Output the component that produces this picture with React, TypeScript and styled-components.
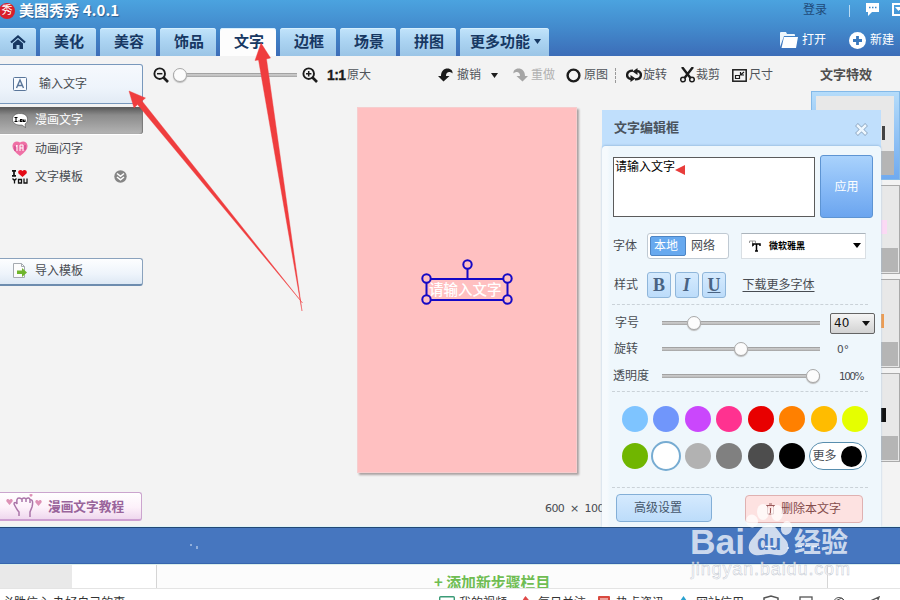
import React from 'react';
import styled, { createGlobalStyle, css } from 'styled-components';

const Global = createGlobalStyle`
  * { box-sizing: border-box; }
  html, body { margin: 0; padding: 0; overflow: hidden; }
  body { font: 12px/16px "Liberation Sans", "Noto Sans CJK SC", sans-serif; color: #484c52; }
`;

const Page = styled.div`
  position: relative; width: 900px; height: 600px; overflow: hidden;
  display: flex; flex-direction: column; background: #f3f3f3; white-space: nowrap;
`;

/* header */
const Header = styled.header`
  height: 56px; flex: none; display: flex; flex-direction: column;
  background: linear-gradient(#4ba3df, #438bcd 48%, #3c6db8);
`;
const TitleBar = styled.div`
  height: 28px; display: flex; align-items: center; padding-bottom: 6px; color: #fff;
  > * { flex: none; }
`;
const Logo = styled.div`
  width: 16px; height: 16px; margin-left: -1px; border-radius: 50%; background: #d91f2a; color: #fff;
  font-size: 11px; line-height: 15px; text-align: center;
`;
const AppName = styled.h1`
  margin: -2px 0 0 4px; font: bold 15px/20px "Noto Sans CJK SC", sans-serif; width: 102px; letter-spacing: .05px;
  text-shadow: 1px 1px 1px #2a5d91;
`;
const Login = styled.span` margin-left: 682px; color: #1f4a79; width: 24px; line-height: 16px; margin-top: -2px; `;
const Separator = styled.span` width: 1px; height: 12px; margin: 0 16px 0 22px; background: #b9dcf4; `;
const ChatIcon = styled.svg` margin-top: -3px; `;
const WindowIcon = styled.svg` margin-left: 13px; margin-top: -3px; `;
const TabBar = styled.nav` height: 28px; display: flex; gap: 4px; `;
const Tab = styled.button<{ $w: number; $active?: boolean }>`
  width: ${p => p.$w}px; height: 28px; padding: 0 0 2px 2px; border: 0; border-radius: 3px 3px 0 0;
  display: flex; align-items: center; justify-content: center; gap: 4px; color: #173863;
  font: bold 15px/22px "Noto Sans CJK SC", sans-serif;
  background: ${p => (p.$active ? '#fdfdfd' : 'linear-gradient(#c2e4fb, #acd4f2 45%, #9bc5e6)')};
  box-shadow: inset 0 1px #d7effd;
  &:first-child { border-top-left-radius: 0; padding: 0 0 1px; }
`;
const HeaderAction = styled.div<{ $ml: number }>`
  display: flex; align-items: center; gap: 4px; margin-left: ${p => p.$ml}px; height: 24px; color: #fff;
`;

/* main area */
const Main = styled.main`
  height: 471px; flex: none; display: grid; grid-template-columns: 143px 668px 89px; overflow: hidden;
  border-bottom: 1px solid #dff4f8;
`;
const Sidebar = styled.aside` display: flex; flex-direction: column; padding-top: 8px; `;
const InputTextButton = styled.button`
  height: 40px; border: 1px solid #7898bc; border-left: 0; border-radius: 0 3px 3px 0; padding: 0 0 0 13px;
  background: linear-gradient(#f6f9fd, #eef4fb 60%, #e2ebf5); display: flex; align-items: center; gap: 12px;
  font: inherit; color: inherit;
`;
const MenuItem = styled.div<{ $active?: boolean }>`
  height: 28px; display: flex; align-items: center; padding: 0 0 1px 12px;
  > span { width: 48px; margin-left: 7px; }
  > svg:nth-of-type(2) { margin-left: 31px; }
  ${p => p.$active && css`
    margin-top: 3px; height: 27px; margin-bottom: 1px; color: #fff; border-radius: 0 3px 3px 0; padding-bottom: 1px;
    background: linear-gradient(#565656, #8b8b8b 30%, #b4b4b4); box-shadow: inset -1px 0 1px #777, 0 1px #fff;
  `}
`;
const ImportButton = styled.button`
  margin-top: 67px; height: 28px; border: 1px solid #8aa2bd; border-bottom: 2px solid #6d8cae; border-left: 0;
  border-radius: 0 3px 3px 0; padding: 0 0 2px 13px; display: flex; align-items: center; gap: 8px;
  background: linear-gradient(#fdfeff, #eef4fb 60%, #dde8f4); font: inherit; color: inherit;
`;
const TutorialButton = styled.button`
  margin-top: 206px; width: 142px; height: 29px; border: 1px solid #cba5ce; border-bottom: 2px solid #cda0d1;
  border-left: 0; border-radius: 0 3px 3px 0; background: linear-gradient(#fff, #fdf1fa 55%, #efd8ee);
  padding: 0 0 0 6px; display: flex; align-items: center; gap: 6px;
  font: bold 12.7px/18px "Noto Sans CJK SC", sans-serif; color: #99649b;
`;

const Workspace = styled.section` display: flex; flex-direction: column; min-width: 0; `;
const Toolbar = styled.div` height: 38px; display: flex; align-items: center; padding-left: 9px; color: #50545a; `;
const Tool = styled.div<{ $ml: number; $w: number; $off?: boolean }>`
  margin-left: ${p => p.$ml}px; width: ${p => p.$w}px; display: flex; align-items: center; flex: none;
  justify-content: space-between; color: ${p => (p.$off ? '#b0b0b0' : 'inherit')};
  svg { color: ${p => (p.$off ? '#a5a5a5' : '#1c1c1c')}; flex: none; }
`;
const Ratio = styled.b` font: bold 14px/16px "Liberation Sans", sans-serif; color: #1c1c1c; letter-spacing: -.6px; -webkit-text-stroke: .3px #1c1c1c; `;
const Dotted = styled.i` margin-left: 7px; height: 15px; border-left: 1px dashed #999; `;
const Track = styled.div<{ $w: number; $ml?: number }>`
  width: ${p => p.$w}px; margin-left: ${p => p.$ml || 0}px; height: 14px; display: flex; align-items: center; flex: none;
  background: linear-gradient(#8d8d8d, #c9c9c9 35%, #c4c4c4 60%, #a0a0a0) center / 100% 4px no-repeat;
`;
const Knob = styled.i<{ $x: number }>`
  width: 14px; height: 14px; margin-left: ${p => p.$x}px; border-radius: 50%; background: #fcfcfc;
  border: 1px solid #a9a9a9; flex: none; box-shadow: 0 1px 1px #bbb;
`;
const Artboard = styled.div`
  position: relative; width: 220px; height: 366px; margin: 13px 0 0 214px; background: #ffc0c1;
  border: 1px solid #f6cdce; box-shadow: 2px 2px 2px #aaa1a1; flex: none;
`;
const Selection = styled.svg` position: absolute; left: 63px; top: 150px; `;
const Dimensions = styled.div`
  margin: 28px 0 0 402px; height: 16px; font: 11px/16px "DejaVu Sans", sans-serif; word-spacing: 3px; letter-spacing: -.6px;
`;

const Gallery = styled.aside` display: flex; flex-direction: column; `;
const GalleryTitle = styled.h2`
  margin: 0; height: 35px; padding: 9px 0 0 9px; font: bold 13px/18px "Noto Sans CJK SC", sans-serif; color: #4e4e4e;
`;
const Thumb = styled.div<{ $active?: boolean }>`
  height: 89px; margin-bottom: 5px; flex: none; display: flex; flex-direction: column; justify-content: space-between;
  border: 1px solid #aaa; background: #e8e8e8; padding: 1px 1px 1px 1px;
  ${p => p.$active && css` border-color: #83b9e8; padding: 4px 5px 4px 4px; background: linear-gradient(#b5dcfa, #6faaf0); `}
`;
const ThumbArt = styled.div<{ $c: string; $w: number; $y: number }>`
  flex: 1; background: #e8e8e8; padding: ${p => p.$y}px 0 0 66px;
  &::after { content: ''; display: block; width: ${p => p.$w}px; height: 14px; background: ${p => p.$c}; }
`;
const ThumbCaption = styled.div` height: 24px; background: #b5b5b5; `;

/* floating editor */
const Dialog = styled.section`
  position: absolute; left: 602px; top: 110px; width: 279px; height: 417px; display: flex; flex-direction: column;
  background: #c0dffc;
`;
const DialogHead = styled.header`
  height: 36px; display: flex; justify-content: space-between; align-items: center; padding: 0 13px 2px 12px;
  font: bold 13px/18px "Noto Sans CJK SC", sans-serif; color: #4a535d; flex: none;
  svg { margin-top: 4px; }
`;
const DialogBody = styled.div`
  flex: 1; border-radius: 4px 4px 0 0; background: linear-gradient(90deg, #f6fafd 5px, #eff7fc 8px); box-shadow: 0 -1px 2px #9fc2e4;
  display: grid; grid-template-rows: 80px 39px 39px 38px 13px 36px 96px 40px; padding-left: 11px;
`;
const Row = styled.div<{ $pt?: number }>` display: flex; align-items: center; min-width: 0; padding-top: ${p => p.$pt || 0}px; `;
const divider = css`
  position: relative; margin-right: 13px;
  &::before { content: ''; position: absolute; left: -1px; right: 0; top: 0; border-top: 1px dashed #cad2d8; }
`;
const Divided = styled(Row)` ${divider} `;
const TextField = styled.textarea`
  width: 202px; height: 60px; resize: none; border: 1px solid #5b5b5b; padding: 0 1px; margin: 1px 0 0;
  background: #fff; overflow: hidden; color: #000; font: 12px/16px "Noto Sans CJK SC", sans-serif;
`;
const Caret = styled.svg` position: absolute; left: 73px; top: 54px; `;
const Apply = styled.button`
  width: 53px; height: 63px; margin: 1px 0 0 5px; border: 1px solid #5d94d3; border-radius: 3px; color: #fff; padding: 0;
  background: linear-gradient(#a9d2fc, #86b9f6 55%, #6ba5ef); font: inherit;
`;
const Label = styled.label<{ $w?: number; $ml?: number }>`
  width: ${p => p.$w || 34}px; margin-left: ${p => p.$ml || 0}px; flex: none;
`;
const Segmented = styled.div`
  width: 82px; height: 26px; border: 1px solid #c0cad3; border-radius: 3px; background: #fff; padding: 2px;
  display: flex; align-items: center; gap: 4px;
`;
const Segment = styled.span<{ $on?: boolean }>`
  height: 20px; width: 37px; line-height: ${p => (p.$on ? 18 : 20)}px; padding-left: ${p => (p.$on ? 3 : 1)}px; border-radius: 2px;
  ${p => p.$on && css` color: #fff; background: #67a9ef; border: 1px solid #4d85c4; `}
`;
const FontSelect = styled.div`
  margin-left: 12px; width: 125px; height: 26px; border: 1px solid #d9dfe4; border-top-color: #abb4bc; background: #fff;
  display: flex; align-items: center; padding: 0 4px 0 7px; color: #000;
  span { font: bold 9px/14px "Noto Sans CJK SC", sans-serif; margin-left: 8px; flex: 1; }
`;
const StyleButton = styled.button<{ $kind: string }>`
  width: 24px; height: 26px; border: 1px solid #8fb6da; border-radius: 3px; margin-right: 3.5px; padding: 0;
  background: linear-gradient(#d6ebfe, #bcdcfa); color: #496383; font: bold 18px/22px "Liberation Serif", serif;
  font-style: ${p => (p.$kind === 'I' ? 'italic' : 'normal')};
  text-decoration: ${p => (p.$kind === 'U' ? 'underline' : 'none')}; text-decoration-thickness: 1px;
`;
const Link = styled.a` margin-left: 13px; text-decoration: underline; text-underline-offset: 2px; `;
const SizeSelect = styled.div`
  width: 45px; height: 21px; margin-left: 10px; border: 1px solid #646464; border-radius: 2px; flex: none;
  background: linear-gradient(#f5f5f5, #d2d2d2); display: flex; align-items: center; justify-content: space-between;
  padding: 0 4px 0 3px; color: #111; font: 12px/18px "DejaVu Sans", sans-serif;
`;
const Value = styled.span<{ $ml: number }>`
  margin-left: ${p => p.$ml}px; font: 10.5px/14px "DejaVu Sans", sans-serif; letter-spacing: ${p => (p.$ml > 18 ? -1.5 : 0)}px;
`;
const Palette = styled.div`
  ${divider}
  display: grid; grid-template-columns: repeat(8, 26px); grid-auto-rows: 26px; column-gap: 5.43px; row-gap: 11px;
  padding: 15px 0 0 9px;
`;
const Swatch = styled.i<{ $c: string; $on?: boolean }>`
  border-radius: 50%; background: ${p => p.$c};
  ${p => p.$on && css` margin: -2px; border: 2px solid #77acd2; `}
`;
const More = styled.div`
  grid-column: span 2; width: 58px; height: 28px; margin: -1px 0 0 -2px; border: 1px solid #588eae; border-radius: 14px;
  background: #fff; display: flex; align-items: center; padding: 0 4px 0 3px; justify-content: space-between;
  i { width: 21px; height: 21px; border-radius: 50%; background: #000; }
`;
const FootButton = styled.button<{ $danger?: boolean }>`
  width: ${p => (p.$danger ? 118 : 96)}px; height: 28px; border-radius: 4px; font: inherit; display: flex; align-items: center;
  flex: none; padding: 0 0 0 ${p => (p.$danger ? 20 : 17)}px; gap: 6px;
  margin: ${p => (p.$danger ? '3px 0 0 33px' : '2px 0 0 3px')};
  border: 1px solid ${p => (p.$danger ? '#dfb1b1' : '#83afd7')};
  background: ${p => (p.$danger ? '#fde2e1' : 'linear-gradient(#d5eafe, #bcdcfa)')};
  color: ${p => (p.$danger ? '#854c4c' : '#45576c')};
`;

/* lower page */
const Band = styled.div` height: 37px; flex: none; background: #4676bf; border-top: 1px solid #234876; border-bottom: 1px solid #3765ae; padding: 10px 0 0 190px; `;
const Lower = styled.footer` flex: 1; background: #fff; border-top: 1px solid #dcefeb; display: flex; flex-direction: column; `;
const StepRow = styled.div` height: 24px; flex: none; display: flex; border-bottom: 1px solid #e4e4e4; `;
const Gray = styled.div` width: 72px; background: #e9e9e9; `;
const StepBox = styled.div`
  margin-left: 84px; width: 672px; border: solid #d5d5d5; border-width: 0 1px; background: #fcfcfc; overflow: hidden;
  padding: 6px 0 0 277px; color: #6fbd52; font: bold 14.9px/22px "Noto Sans CJK SC", sans-serif;
`;
const Status = styled.div` height: 22px; flex: none; display: flex; align-items: center; padding: 6px 0 0 2px; color: #333; `;
const StatusItem = styled.div<{ $ml: number; $w?: number }>`
  margin-left: ${p => p.$ml}px; display: flex; width: ${p => p.$w || 67}px; flex: none; justify-content: space-between; align-items: center;
`;

/* overlays */
const Overlay = styled.svg` position: absolute; left: 0; top: 0; pointer-events: none; `;

const Down = ({ s = 8 }: { s?: number }) => <svg width={s} height="5"><path d={`M0 0H${s}L${s / 2} 5Z`} fill="currentColor" /></svg>;
const Lens = ({ plus }: { plus?: boolean }) => (
  <svg width="16" height="16" viewBox="0 0 16 16" fill="none" stroke="currentColor">
    <circle cx="6.7" cy="6.7" r="5.3" strokeWidth="1.9" /><path d="M10.5 10.5L15 15" strokeWidth="2.7" />
    <path d={plus ? 'M4 6.7h5.4M6.7 4v5.4' : 'M4 6.7h5.4'} strokeWidth="1.5" />
  </svg>
);
const Turn = ({ redo }: { redo?: boolean }) => (
  <svg width="15" height="14" viewBox="0 0 15 14">
    <path transform={redo ? 'translate(15 0) scale(-1 1)' : undefined} fill="currentColor"
      d="M0 8h3C3 3 6 .5 9.5.5 13 .5 15 3 14.5 5.500 12.500 3.500 8 3 8 8h3.500L5.500 13.500Z" />
  </svg>
);

const colors = ['#7ec4ff', '#7096fb', '#ca47fc', '#ff3290', '#e80000', '#ff8000', '#ffbc00', '#e5ff00',
  '#70b600', '#ffffff', '#b2b2b2', '#808080', '#4d4d4d', '#000000'];

export default function App() {
  return (
    <Page>
      <Global />
      <Header>
        <TitleBar>
          <Logo>秀</Logo><AppName>美图秀秀 4.0.1</AppName>
          <Login>登录</Login><Separator />
          <ChatIcon width="13" height="13" viewBox="0 0 13 13"><path d="M0 0h13v9H6l-4 4V9H0Z" fill="#fff" /><path d="M3 4.500h1.500M6 4.500h1.500M9 4.500h1.500" stroke="#3986c7" strokeWidth="1.500" /></ChatIcon>
          <WindowIcon width="13" height="13" viewBox="0 0 13 13"><rect x="1" y="1" width="11" height="11" fill="none" stroke="#fff" strokeWidth="2" /><path d="M3 4h7L6.500 8Z" fill="#fff" /></WindowIcon>
        </TitleBar>
        <TabBar>
          <Tab $w={36}>
            <svg width="16" height="14" viewBox="0 0 16 14"><path d="M1 7.500L8 1.500l7 6" fill="none" stroke="#173863" strokeWidth="2.200" /><path d="M3 8.500L8 4.300l5 4.200V14H9.500v-4h-3v4H3Z" fill="#173863" /></svg>
          </Tab>
          {['美化', '美容', '饰品', '文字', '边框', '场景', '拼图'].map(t => <Tab key={t} $w={56} $active={t === '文字'}>{t}</Tab>)}
          <Tab $w={89}>更多功能<Down s={7} /></Tab>
          <HeaderAction $ml={227}>
            <svg width="18" height="16" viewBox="0 0 18 16"><path d="M0 15V1q0-1 1-1h5l1 2h7q1 0 1 1v1H4Z" fill="#eef7fd" /><path d="M4 5h14l-2 11H1.500Z" fill="#fff" /></svg>打开
          </HeaderAction>
          <HeaderAction $ml={19}>
            <svg width="17" height="17" viewBox="0 0 17 17"><circle cx="8.500" cy="8.500" r="8.500" fill="#fff" /><path d="M4 8.500h9M8.500 4v9" stroke="#3978bd" strokeWidth="2.800" /></svg>新建
          </HeaderAction>
        </TabBar>
      </Header>

      <Main>
        <Sidebar>
          <InputTextButton>
            <svg width="14" height="14" viewBox="0 0 14 14" fill="none" stroke="#5a769a"><rect x=".5" y=".5" width="13" height="13" rx="1" fill="#f8fbff" /><path d="M3.500 11L7 3l3.500 8M5 8.500h4" strokeWidth="1.400" /></svg>
            输入文字
          </InputTextButton>
          <MenuItem $active>
            <svg width="16" height="15" viewBox="0 0 16 15"><path d="M8 .5c5 0 7.500 2.500 7.500 5.800 0 2.500-1 3.800-2.500 4.700l.5 3.500L10 12C4 12.600.5 10 .5 6.500.5 3 3 .5 8 .5Z" fill="#fff" stroke="#333" strokeWidth=".5" /><path d="M2.500 4.500h3M4 4.500v4M2.500 8.500h3M7 8.500V7.500M8.500 6.500h1.500v2H8.500ZM11.500 6.500v2h1.500v-2" stroke="#000" fill="none" strokeWidth="1.100" /></svg>
            <span>漫画文字</span>
          </MenuItem>
          <MenuItem>
            <svg width="16" height="15" viewBox="0 0 16 15"><path d="M8 15C3 11.500 0 8 .5 4.500 1 .5 5-.5 8 1.500 11-.5 15 .5 15.500 4.500 16 8 13 11.500 8 15Z" fill="#ef70a5" /><path d="M5 4v6M4 6l1-2M8 4h3v6M8 7h3M8 4v6" stroke="#fff" fill="none" /><path d="M3 5v5M13 4v5" stroke="#c33f87" /></svg>
            <span>动画闪字</span>
          </MenuItem>
          <MenuItem>
            <svg width="16" height="14" viewBox="0 0 16 14"><path d="M0 .8h4M2 1v5M0 5.800h4" stroke="#111" strokeWidth="1.700" /><path d="M10.500 7L6.500 3.500C5 .5 9-1 10.500 1 12-1 16 .5 14.500 3.500Z" fill="#e40b16" /><path d="M.5 8.500l2 2 2-2M2.500 10.500v3M6.500 9.500h3v3.500h-3ZM12 8.500V13h3V8.500" stroke="#111" fill="none" strokeWidth="1.300" /></svg>
            <span>文字模板</span>
            <svg width="13" height="13" viewBox="0 0 13 13"><circle cx="6.500" cy="6.500" r="6.200" fill="#858585" /><path d="M3 3.500l3.500 2.800L10 3.500M3 7l3.500 2.800L10 7" fill="none" stroke="#fff" strokeWidth="1.600" /></svg>
          </MenuItem>
          <ImportButton>
            <svg width="14" height="15" viewBox="0 0 14 15"><path d="M.5.5h8l3 3v11H.5Z" fill="#fcfcfc" stroke="#a5aab0" /><path d="M8.500.5v3h3" fill="none" stroke="#a5aab0" /><path d="M4 7.500h5V5l5 4.500L9 14v-3H4Z" fill="#6fb52d" /></svg>
            导入模板
          </ImportButton>
          <TutorialButton>
            <svg width="36" height="24" viewBox="0 0 36 24" fill="none"><path d="M13 22v-4c-2-2-4-6-5-8 0-2 2-2 3 0 0-2-1-6 2-6 2 0 2 1 3 1 2-2 3-1 4 0 2-2 4-1 4 1 3-1 3 3 2 7l-2 5v5M16 5v3M20 5v3M24 6v3" stroke="#ab76a9" strokeWidth="1.500" /><g fill="#dd91b5"><path d="M3.500 11L.5 7.500C-.5 5 2.500 4 3.500 6 4.500 4 7.500 5 6.500 7.500Z" /><path d="M32.500 12L29.500 8.500C28.500 6 31.500 5 32.500 7 33.500 5 36.500 6 35.500 8.500Z" /><path d="M25 3l-1.500-1.500C23 0 25-.5 25 .5 25-.5 27 0 26.500 1.500Z" /></g></svg>
            漫画文字教程
          </TutorialButton>
        </Sidebar>

        <Workspace>
          <Toolbar>
            <Tool $ml={1} $w={16}><Lens /></Tool>
            <Track $w={124} $ml={4}><Knob $x={0} /></Track>
            <Tool $ml={5} $w={16}><Lens plus /></Tool>
            <Tool $ml={9} $w={44}><Ratio>1:1</Ratio><span>原大</span></Tool>
            <Tool $ml={67} $w={43}><Turn /><span>撤销</span></Tool>
            <Tool $ml={10} $w={8}><Down s={7} /></Tool>
            <Tool $ml={14} $w={42} $off><Turn redo /><span>重做</span></Tool>
            <Tool $ml={11} $w={42}><svg width="15" height="15"><circle cx="7.500" cy="7.500" r="5.900" fill="none" stroke="currentColor" strokeWidth="2.400" /></svg><span>原图</span></Tool>
            <Dotted />
            <Tool $ml={10} $w={41}>
              <svg width="16" height="14" viewBox="0 0 16 14" fill="none" stroke="currentColor" strokeWidth="2.400"><path d="M7 2.600C-.5 2.500-.5 10.500 5 11M9 11.400c7.500.1 7.500-7.900 2-8.400" /><path d="M4.500 7L9.500 10.500l-5 3.500ZM11.500 0L6.500 3.500l5 3.500Z" fill="currentColor" stroke="none" /></svg><span>旋转</span>
            </Tool>
            <Tool $ml={13} $w={40}>
              <svg width="15" height="16" viewBox="0 0 15 16" fill="none" stroke="currentColor"><path d="M2 0l8.500 11M13 0L4.500 11" strokeWidth="2.400" /><circle cx="3" cy="12.500" r="2.300" strokeWidth="1.500" /><circle cx="12" cy="12.500" r="2.300" strokeWidth="1.500" /></svg><span>裁剪</span>
            </Tool>
            <Tool $ml={12} $w={41}>
              <svg width="15" height="13" viewBox="0 0 15 13" fill="none" stroke="currentColor"><rect x=".8" y=".8" width="13.400" height="11.400" strokeWidth="1.500" /><path d="M3.500 6.500h4v3h-4ZM12 3L8.500 6M8.500 3v3H12" strokeWidth="1.200" /></svg><span>尺寸</span>
            </Tool>
          </Toolbar>
          <Artboard>
            <Selection width="96" height="50" viewBox="0 0 96 50">
              <text x="8" y="36.500" fill="#fff" fontSize="14.500" fontWeight="500" fontFamily="Noto Sans CJK SC">请输入文字</text>
              <g stroke="#1509c5" strokeWidth="2" fill="none"><path d="M5.500 21h81v21h-81ZM46.500 7v13" />
                <g fill="#ffc0c1">{[[5.5, 20.5], [86.5, 20.5], [5.5, 41.5], [86.5, 41.5], [46.5, 6.5]].map(([x, y]) => <circle key={`${x}-${y}`} cx={x} cy={y} r="4.200" />)}</g></g>
            </Selection>
          </Artboard>
          <Dimensions>600 × 1000</Dimensions>
        </Workspace>

        <Gallery>
          <GalleryTitle>文字特效</GalleryTitle>
          <Thumb $active><ThumbArt $c="#444" $w={3} $y={30} /><ThumbCaption /></Thumb>
          <Thumb><ThumbArt $c="#fbd9f4" $w={8} $y={33} /><ThumbCaption /></Thumb>
          <Thumb><ThumbArt $c="#ee9b50" $w={5} $y={33} /><ThumbCaption /></Thumb>
          <Thumb><ThumbArt $c="#111" $w={7} $y={33} /><ThumbCaption /></Thumb>
        </Gallery>
      </Main>

      <Band><svg width="10" height="6"><path d="M0 1h2M7 2v3" stroke="#dce8f8" /></svg></Band>
      <Lower>
        <StepRow><Gray /><StepBox>+ 添加新步骤栏目</StepBox></StepRow>
        <Status>
          <StatusItem $ml={0} $w={124}>必胜信心 办好自己的事</StatusItem>
          <StatusItem $ml={313} $w={68}><svg width="16" height="14"><rect x=".7" y=".7" width="14.600" height="12" rx="1" fill="#fff" stroke="#3b9b77" strokeWidth="1.400" /><path d="M6 4l5 3-5 3Z" fill="#e44" /></svg>我的视频</StatusItem>
          <StatusItem $ml={14} $w={65}><svg width="10" height="14"><path d="M4.500 0C8 4 10 6 10 9q0 5-5 5T0 9Q1 4 4.500 0Z" fill="#df4a49" /></svg>每日关注</StatusItem>
          <StatusItem $ml={12} $w={66}><svg width="12" height="14"><rect width="12" height="14" rx="1" fill="#d9493f" /><path d="M2 3h8M2 6h8" stroke="#fff" /></svg>热点资讯</StatusItem>
          <StatusItem $ml={14} $w={66}><svg width="11" height="14"><path d="M5.500 0L11 8q0 6-5.500 6T0 8Z" fill="#2aa1cf" /></svg>网站信用</StatusItem>
          <StatusItem $ml={19} $w={117}>
            <svg width="16" height="16" fill="none" stroke="#555" strokeWidth="1.500"><path d="M1 3l7-2 7 2v7q-3 4-7 5-4-1-7-5ZM6 6h5M6 6v4" /></svg>
            <svg width="14" height="14" fill="none" stroke="#555" strokeWidth="1.300"><rect x="1" y="1" width="12" height="11" /><path d="M3 8l3-3 4 4" /></svg>
            <svg width="15" height="14" fill="none" stroke="#555"><circle cx="7" cy="7" r="5.500" /><path d="M3 5l7-3 3 3-5 5" /></svg>
            <svg width="13" height="14" fill="none" stroke="#555" strokeWidth="1.300"><path d="M1 6l11-5-4 11-3-4Z" /></svg>
          </StatusItem>
        </Status>
      </Lower>

      <Dialog>
        <DialogHead>文字编辑框
          <svg width="13" height="13" viewBox="0 0 13 13"><path d="M1.500 1.500l10 10M11.500 1.500l-10 10" stroke="#8da6c0" strokeWidth="4" /><path d="M2 2l9 9M11 2l-9 9" stroke="#edf7ff" strokeWidth="2.500" /></svg>
        </DialogHead>
        <DialogBody>
          <Row><TextField defaultValue="请输入文字" spellCheck={false} /><Apply>应用</Apply></Row>
          <Row><Label>字体</Label><Segmented><Segment $on>本地</Segment><Segment>网络</Segment></Segmented>
            <FontSelect><svg width="12" height="12" viewBox="0 0 12 12" fill="none"><path d="M.5 3V1h6v2M3.500 1v6" stroke="#999" /><path d="M4 6V4h7v2M7.500 4v7M6 11h3" stroke="#000" strokeWidth="1.500" /></svg><span>微软雅黑</span><Down s={8} /></FontSelect></Row>
          <Row><Label $ml={1} $w={33}>样式</Label>{['B', 'I', 'U'].map(k => <StyleButton key={k} $kind={k}>{k}</StyleButton>)}<Link>下载更多字体</Link></Row>
          <Divided><Label $ml={2} $w={47}>字号</Label><Track $w={158}><Knob $x={25} /></Track><SizeSelect>40<Down s={8} /></SizeSelect></Divided>
          <Row><Label $ml={1} $w={48}>旋转</Label><Track $w={158}><Knob $x={72} /></Track><Value $ml={17}>0°</Value></Row>
          <Row $pt={6}><Label $w={49}>透明度</Label><Track $w={158}><Knob $x={144} /></Track><Value $ml={19}>100%</Value></Row>
          <Palette>
            {colors.map(c => <Swatch key={c} $c={c} $on={c === '#ffffff'} />)}
            <More>更多<i /></More>
          </Palette>
          <Divided>
            <FootButton>高级设置</FootButton>
            <FootButton $danger><svg width="9" height="12" fill="none" stroke="#9a5858"><path d="M0 2.500h9M3 1h3M1.500 3v8h6V3M4.500 5v5" /></svg>删除本文字</FootButton>
          </Divided>
        </DialogBody>
        <Caret width="10" height="12"><path d="M0 6L10 1v10Z" fill="#e83d3b" /></Caret>
      </Dialog>

      <Overlay width="900" height="600" viewBox="0 0 900 600">
        <g fill="#ef3d3e">
          <path d="M129 91L145.500 98 142 101 302.500 303 137.500 104.500 134 108Z" stroke="#ef3d3e" strokeWidth=".4" />
          <path d="M261 43L270.500 58 266.500 59 302 311 258.500 60 255 60.500Z" stroke="#ef3d3e" strokeWidth=".4" />
        </g>
        <g fill="#fff" fillOpacity=".74">
          <text x="690" y="554" fontSize="35" fontWeight="700" fontFamily="Liberation Sans" textLength="55" lengthAdjust="spacingAndGlyphs">Bai</text>
          <ellipse cx="752" cy="521" rx="6" ry="6.500" transform="rotate(-15 752 521)" />
          <ellipse cx="763" cy="512" rx="6" ry="8" /><ellipse cx="777" cy="513" rx="6" ry="8" /><ellipse cx="786.500" cy="528" rx="5.500" ry="7" transform="rotate(15 786.500 528)" />
          <path d="M769 525c8 0 10 8 15 13 6 5 6 15-2 17-5 1-8-1-13-1s-9 2-14 1c-8-2-8-11-2-17 5-5 8-13 16-13Z" />
          <text x="794" y="552" fontSize="27" fontWeight="700" fontFamily="Noto Sans CJK SC">经验</text>
          <text x="691" y="575" fontSize="18" fontFamily="Liberation Sans" fill="#fff" stroke="#bcc4ce" strokeWidth=".45" textLength="159">jingyan.baidu.com</text>
        </g>
        <text x="757" y="550" fontSize="22" fontWeight="700" fontFamily="Liberation Sans" fill="#4676bf" textLength="24" lengthAdjust="spacingAndGlyphs">du</text>
        <path d="M765 546.500h10M788 547v2M798 546.500h4M805 546h5M812 546.500h5M819 547v2" stroke="#e7f0fb" strokeWidth="1.500" />
      </Overlay>
    </Page>
  );
}
